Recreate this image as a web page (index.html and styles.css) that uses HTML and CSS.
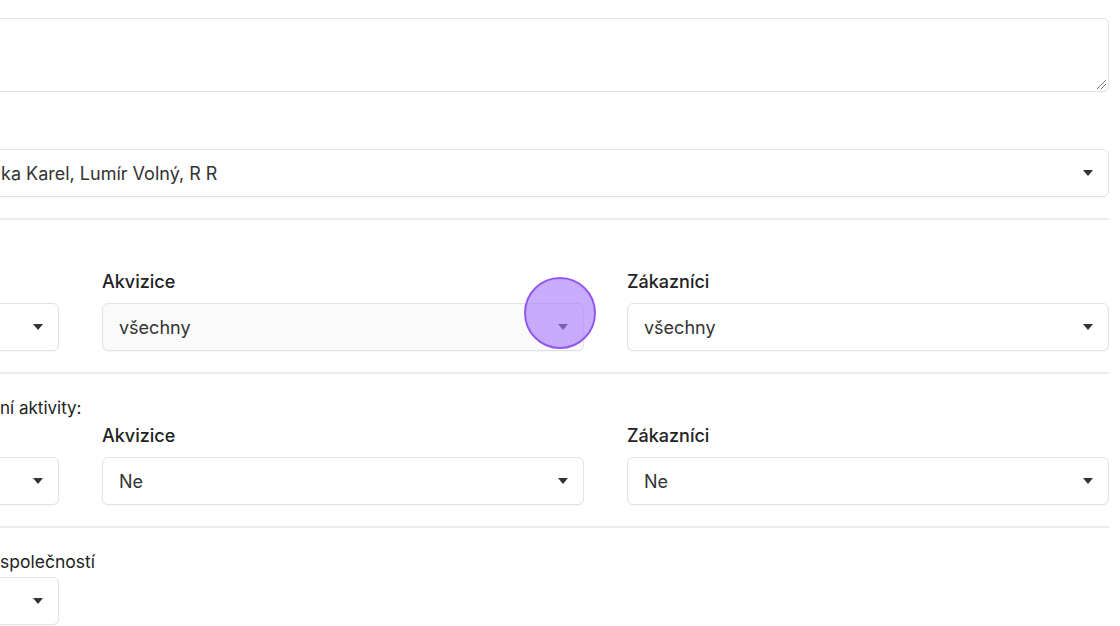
FILE: index.html
```html
<!DOCTYPE html>
<html lang="cs">
<head>
<meta charset="utf-8">
<link rel="stylesheet" href="styles.css">
</head>
<body>
<div class="page">
  <div class="form">
    <div class="textarea"><span class="grip"></span></div>

    <div class="select wide"><span class="value lead">ka Karel, Lumír Volný, R R</span><span class="caret"></span></div>

    <hr class="sep">

    <div class="row first">
      <div class="field">
        <div class="label"></div>
        <div class="select"><span class="caret"></span></div>
      </div>
      <div class="field">
        <div class="label">Akvizice</div>
        <div class="select hover"><span class="value">všechny</span><span class="caret"></span></div>
      </div>
      <div class="field">
        <div class="label">Zákazníci</div>
        <div class="select"><span class="value">všechny</span><span class="caret"></span></div>
      </div>
    </div>

    <hr class="sep">

    <div class="section-label lead">ní aktivity:</div>
    <div class="row second">
      <div class="field">
        <div class="label"></div>
        <div class="select"><span class="caret"></span></div>
      </div>
      <div class="field">
        <div class="label">Akvizice</div>
        <div class="select"><span class="value">Ne</span><span class="caret"></span></div>
      </div>
      <div class="field">
        <div class="label">Zákazníci</div>
        <div class="select"><span class="value">Ne</span><span class="caret"></span></div>
      </div>
    </div>

    <hr class="sep">

    <div class="row third">
      <div class="field">
        <div class="label plain lead">společností</div>
        <div class="select"><span class="caret"></span></div>
      </div>
    </div>
  </div>
  <div class="cursor"></div>
</div>
</body>
</html>
```

FILE: styles.css
```css
* { box-sizing: border-box; }
html, body { margin: 0; padding: 0; background: #fff; }
body {
  width: 1120px;
  height: 626px;
  overflow: hidden;
  font-family: Inter, "Liberation Sans", sans-serif;
  color: #222;
}
.page { position: relative; width: 1120px; height: 626px; overflow: hidden; }
.form {
  margin-left: -423px;
  width: 1532px;
  padding-top: 18px;
  display: flex;
  flex-direction: column;
}
.textarea {
  position: relative;
  height: 74px;
  border: 1px solid #e2e2e2;
  border-radius: 6px;
  background: #fff;
}
.grip {
  position: absolute;
  right: 2px;
  bottom: 2px;
  width: 9px;
  height: 9px;
  background:
    linear-gradient(135deg, transparent 45%, #777 45%, #777 55%, transparent 55%) 0 0 / 9px 9px no-repeat,
    linear-gradient(135deg, transparent 45%, #777 45%, #777 58%, transparent 58%) 4px 4px / 5px 5px no-repeat;
}
.select {
  position: relative;
  height: 48px;
  border: 1px solid #e2e2e2;
  border-radius: 6px;
  background: #fff;
  display: flex;
  align-items: center;
  padding-left: 16px;
  font-size: 18px;
  color: #333;
  box-shadow: 0 1px 1px rgba(0,0,0,0.03);
}
.select.hover { background: #fafafa; }
.select.wide { margin-top: 57px; }
.lead { padding-left: 423px; }
.select.wide .value.lead { padding-left: 407px; }
.caret {
  position: absolute;
  right: 15px;
  top: 50%;
  margin-top: -3px;
  width: 0;
  height: 0;
  border-left: 5.5px solid transparent;
  border-right: 5.5px solid transparent;
  border-top: 6px solid #333;
}
.sep {
  margin: 21px 0 0 0;
  border: 0;
  border-top: 2px solid #ececec;
  height: 0;
}
.row {
  display: grid;
  grid-template-columns: 482px 482px 482px;
  column-gap: 43px;
}
.row.first { margin-top: 49px; }
.label {
  font-size: 18px;
  font-weight: 500;
  line-height: 26px;
  height: 25px;
  margin-bottom: 9px;
  color: #222;
}
.section-label {
  margin-top: 22px;
  font-size: 17px;
  line-height: 24px;
  height: 24px;
  color: #222;
}
.row.second { margin-top: 3px; }
.row.third { margin-top: 22px; }
.label.plain {
  font-size: 17.5px;
  font-weight: 400;
  line-height: 24px;
  height: 24px;
  margin-bottom: 3px;
}
.cursor {
  position: absolute;
  left: 524px;
  top: 277px;
  width: 72px;
  height: 72px;
  border-radius: 50%;
  border: 2.5px solid #9457ee;
  background: rgba(168, 122, 252, 0.62);
}
```
